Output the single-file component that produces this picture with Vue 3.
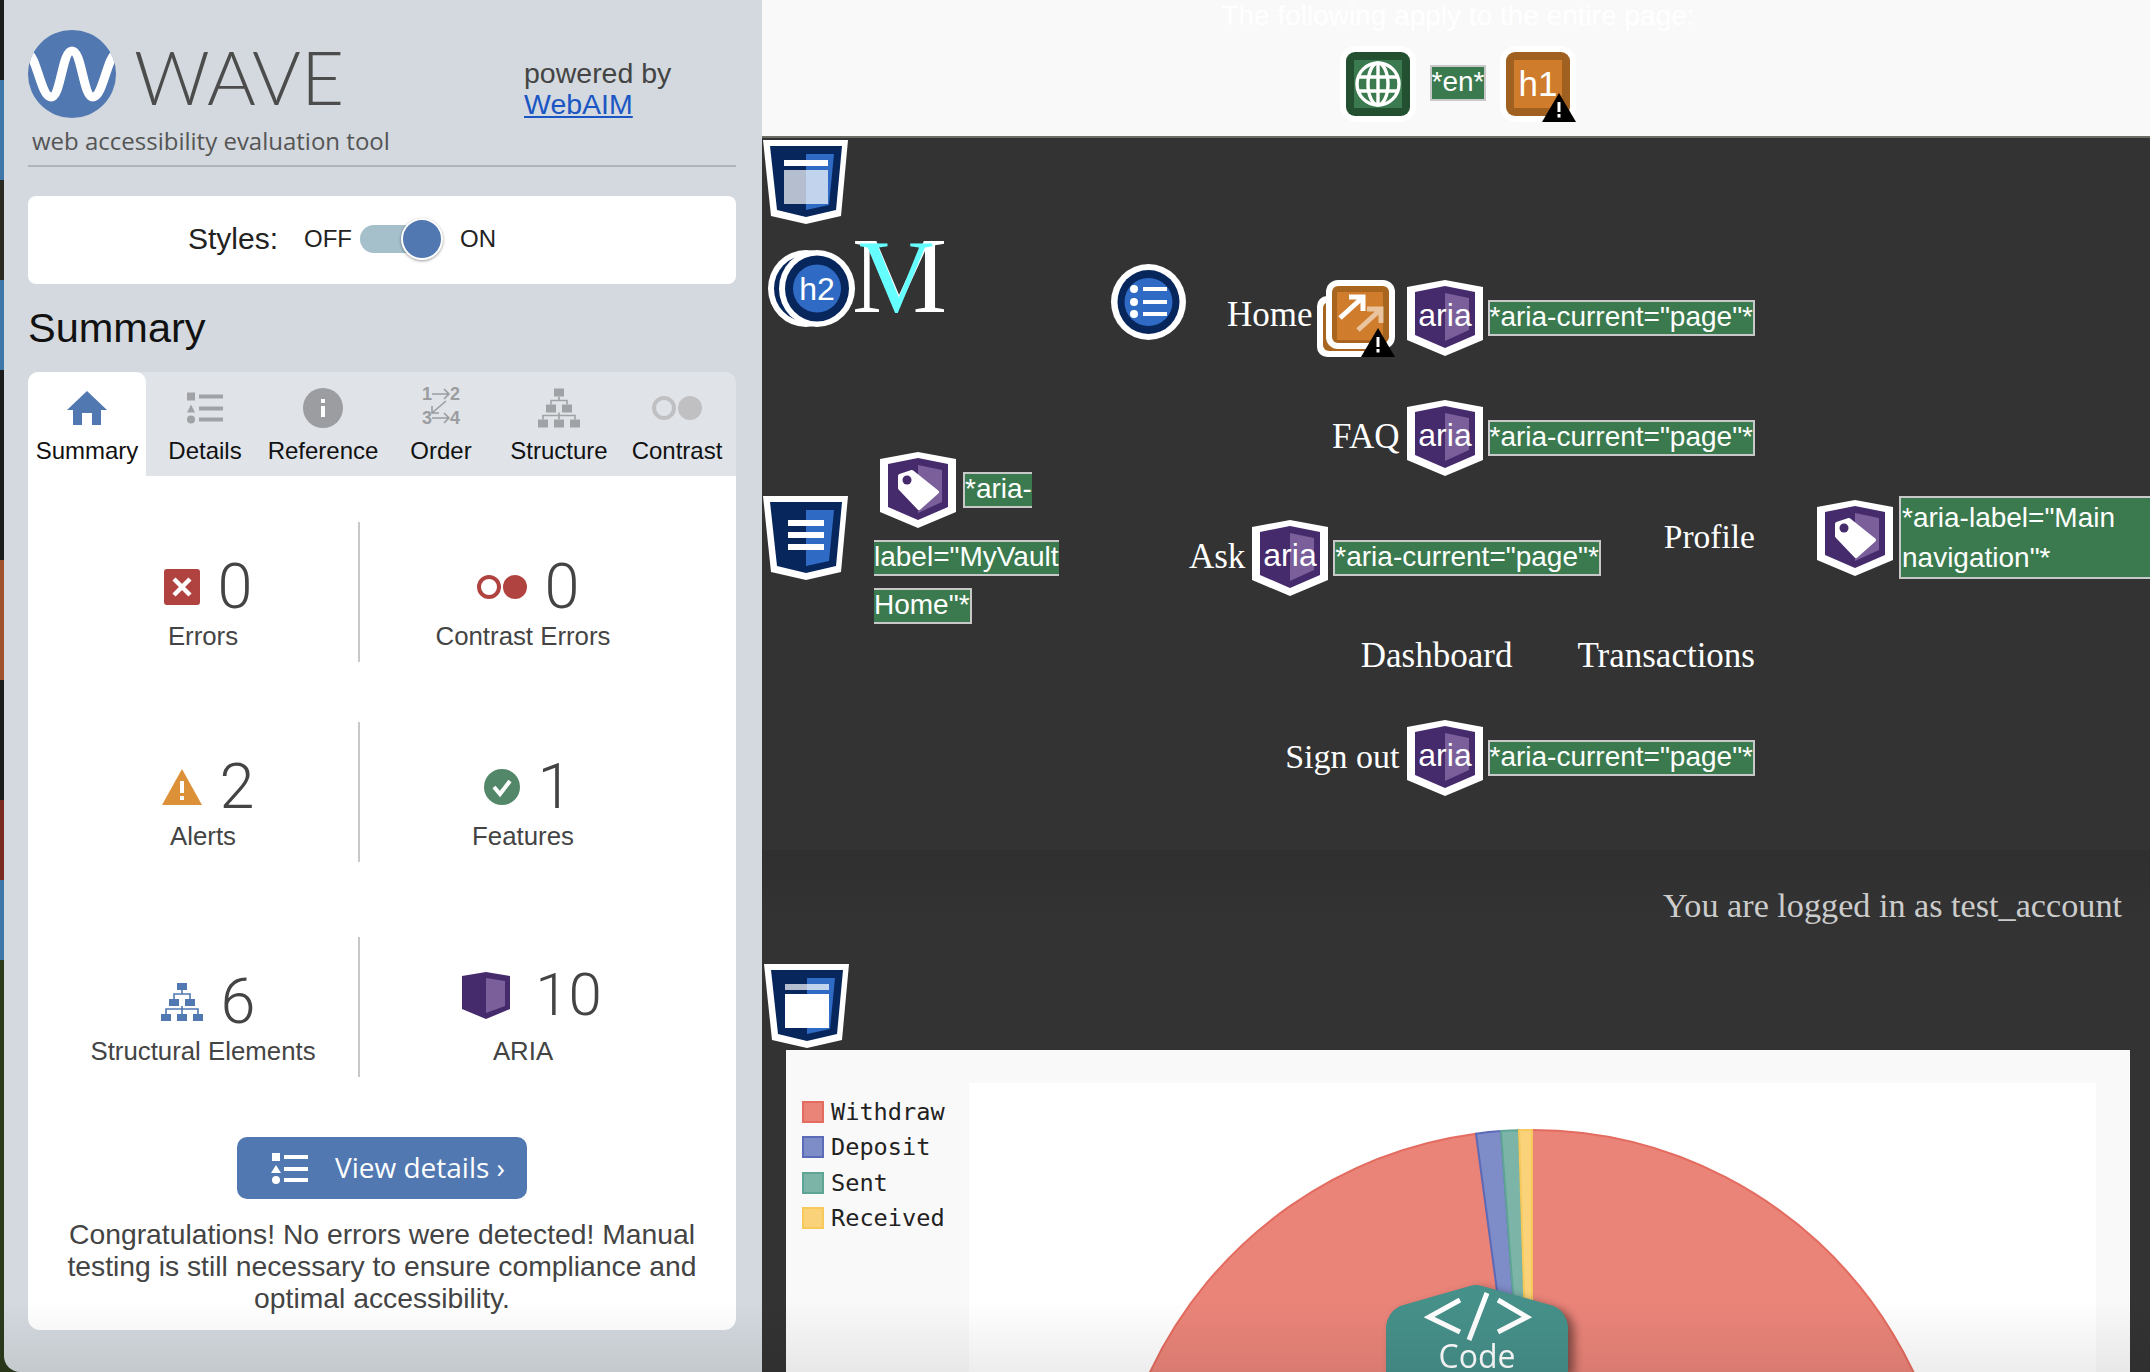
<template>
  <div class="window">
    <svg class="sprite" width="0" height="0">
      <defs>
        <symbol id="aria-shield" viewBox="0 0 76 76">
          <polygon points="0,7 38,0 76,7 76,60 38,76 0,60" fill="#fff" />
          <polygon points="8,12 38,6 68,12 68,55 38,68 8,55" fill="#452a6c" />
          <polygon points="38,13 62,18 62,50 38,61" fill="#7a5f9a" />
        </symbol>
        <symbol id="struct-shield" viewBox="0 0 85 84">
          <polygon points="0,0 85,0 78,76 43,84 8,76" fill="#fff" />
          <polygon points="7,6 79,6 73,70 43,77 14,70" fill="#07265c" />
          <polygon points="43,14 71,14 66,65 43,70" fill="#2f6bc4" />
        </symbol>
      </defs>
    </svg>

    <aside class="panel">
      <header class="brand">
        <div>
          <div class="brand-logo">
            <svg width="88" height="88" viewBox="0 0 88 88">
              <clipPath id="logo-clip"><circle cx="44" cy="44" r="44" /></clipPath>
              <circle cx="44" cy="44" r="44" fill="#5178b0" />
              <path clip-path="url(#logo-clip)" d="M0 24C8 24 13 67 23 67C33 67 34 21 44 21C54 21 55 67 65 67C75 67 80 24 88 24" fill="none" stroke="#fff" stroke-width="9" />
            </svg>
            <span class="brand-name">WAVE</span>
          </div>
          <div class="brand-sub">web accessibility evaluation tool</div>
        </div>
        <div class="powered">powered by<br /><a href="#">WebAIM</a></div>
      </header>

      <div class="styles-card">
        <span class="styles-title">Styles:</span>
        <span class="styles-state">OFF</span>
        <span class="toggle"><span class="knob"></span></span>
        <span class="styles-state on">ON</span>
      </div>

      <h2 class="summary-title">Summary</h2>

      <nav class="tabs">
        <div class="tab active">
          <svg width="40" height="34" viewBox="0 0 40 34"><path d="M20 0L40 19H34V34H25V22H15V34H6V19H0Z" fill="#5178b0" /></svg>
          <span>Summary</span>
        </div>
        <div class="tab">
          <svg width="36" height="31" viewBox="0 0 36 31" fill="#a0a2a5">
            <rect x="0" y="0" width="8" height="8" /><rect x="12" y="2" width="24" height="4" />
            <polygon points="4,12 8,20 0,20" /><rect x="12" y="14" width="24" height="4" />
            <circle cx="4" cy="27" r="4" /><rect x="12" y="25" width="24" height="4" />
          </svg>
          <span>Details</span>
        </div>
        <div class="tab">
          <svg width="40" height="40" viewBox="0 0 40 40">
            <circle cx="20" cy="20" r="20" fill="#9b9da0" />
            <rect x="18" y="11" width="4" height="4" fill="#fff" /><rect x="18" y="18" width="4" height="11" fill="#fff" />
          </svg>
          <span>Reference</span>
        </div>
        <div class="tab">
          <svg class="order-icon" width="38" height="42" viewBox="0 0 38 42" fill="none" stroke="#9b9da0" stroke-width="1.6">
            <text x="0" y="13" class="order-num">1</text>
            <text x="28" y="13" class="order-num">2</text>
            <text x="0" y="37" class="order-num">3</text>
            <text x="28" y="37" class="order-num">4</text>
            <path d="M10 7H27M22 2L27 7L22 12" />
            <path d="M24 14L10 26M10 19V26H17" />
            <path d="M10 31H27M22 26L27 31L22 36" />
          </svg>
          <span>Order</span>
        </div>
        <div class="tab">
          <svg width="42" height="39" viewBox="0 0 42 39" fill="#a0a2a5" stroke="none">
            <rect x="16" y="0" width="10" height="8" /><rect x="8" y="16" width="10" height="8" /><rect x="24" y="16" width="10" height="8" />
            <rect x="0" y="31" width="10" height="8" /><rect x="16" y="31" width="10" height="8" /><rect x="32" y="31" width="10" height="8" />
            <path d="M21 8V12M13 16V12H29V16M21 24V27M5 31V27H37V31M21 27V31" fill="none" stroke="#a0a2a5" stroke-width="1.6" />
          </svg>
          <span>Structure</span>
        </div>
        <div class="tab">
          <svg width="50" height="25" viewBox="0 0 50 25">
            <circle cx="12" cy="12.5" r="10" fill="none" stroke="#c0c0c3" stroke-width="4" /><circle cx="38" cy="12.5" r="12" fill="#c0c0c3" />
          </svg>
          <span>Contrast</span>
        </div>
      </nav>

      <section class="results">
        <div class="stats">
          <div class="stat">
            <div class="stat-top">
              <svg width="36" height="36" viewBox="0 0 36 36">
                <rect width="36" height="36" rx="3" fill="#b04340" />
                <path d="M10 10L26 26M26 10L10 26" stroke="#fff" stroke-width="4.5" />
              </svg>
              <span class="num">0</span>
            </div>
            <div class="stat-label">Errors</div>
          </div>
          <div class="stat">
            <div class="stat-top">
              <svg width="50" height="24" viewBox="0 0 50 24">
                <circle cx="12" cy="12" r="10" fill="none" stroke="#b04340" stroke-width="4" /><circle cx="38" cy="12" r="12" fill="#b04340" />
              </svg>
              <span class="num">0</span>
            </div>
            <div class="stat-label">Contrast Errors</div>
          </div>
          <div class="stat">
            <div class="stat-top">
              <svg width="40" height="36" viewBox="0 0 40 36">
                <polygon points="20,0 40,36 0,36" fill="#dc9038" />
                <rect x="18" y="12" width="4" height="12" fill="#fff" /><rect x="18" y="27" width="4" height="4" fill="#fff" />
              </svg>
              <span class="num">2</span>
            </div>
            <div class="stat-label">Alerts</div>
          </div>
          <div class="stat">
            <div class="stat-top">
              <svg width="36" height="36" viewBox="0 0 36 36">
                <circle cx="18" cy="18" r="18" fill="#53876a" />
                <path d="M10 18L16 25L26 12" fill="none" stroke="#fff" stroke-width="4" />
              </svg>
              <span class="num">1</span>
            </div>
            <div class="stat-label">Features</div>
          </div>
          <div class="stat">
            <div class="stat-top">
              <svg width="42" height="38" viewBox="0 0 42 38" fill="#5178b0">
                <rect x="16" y="0" width="10" height="7" /><rect x="8" y="16" width="10" height="7" /><rect x="24" y="16" width="10" height="7" />
                <rect x="0" y="31" width="10" height="7" /><rect x="16" y="31" width="10" height="7" /><rect x="32" y="31" width="10" height="7" />
                <path d="M21 7V11M13 16V11H29V16M21 23V26M5 31V26H37V31M21 26V31" fill="none" stroke="#5178b0" stroke-width="1.6" />
              </svg>
              <span class="num">6</span>
            </div>
            <div class="stat-label">Structural Elements</div>
          </div>
          <div class="stat">
            <div class="stat-top raised">
              <svg width="48" height="47" viewBox="0 0 48 47">
                <polygon points="0,4 24,0 48,4 48,37 24,47 0,37" fill="#452a6c" />
                <polygon points="24,6 43,9 43,34 24,41" fill="#7a5f9a" />
              </svg>
              <span class="num ten">10</span>
            </div>
            <div class="stat-label">ARIA</div>
          </div>
        </div>

        <button class="details-btn">
          <svg width="37" height="31" viewBox="0 0 37 31" fill="#fff">
            <rect x="1" y="0" width="8" height="8" /><rect x="13" y="2" width="24" height="4" />
            <polygon points="5,12 10,20 0,20" /><rect x="13" y="14" width="24" height="4" />
            <circle cx="5" cy="27" r="4" /><rect x="13" y="25" width="24" height="4" />
          </svg>
          <span>View details ›</span>
        </button>

        <p class="congrats">Congratulations! No errors were detected! Manual testing is still necessary to ensure compliance and optimal accessibility.</p>
      </section>
    </aside>

    <main class="page">
      <div class="topbar">
        <div class="topbar-note">The following apply to the entire page:</div>
        <div class="topbar-icons">
          <svg width="76" height="76" viewBox="0 0 76 76">
            <rect width="76" height="76" rx="16" fill="#fff" />
            <rect x="6" y="6" width="64" height="64" rx="9" fill="#225030" />
            <rect x="14" y="14" width="48" height="48" fill="#3b7a4e" />
            <g fill="none" stroke="#fff" stroke-width="3.4">
              <circle cx="38" cy="38" r="21" />
              <ellipse cx="38" cy="38" rx="10" ry="21" />
              <path d="M38 17V59M18 31H58M18 45H58" />
            </g>
          </svg>
          <span class="wave-label en">*en*</span>
          <svg width="76" height="76" viewBox="0 0 76 76">
            <rect width="76" height="76" rx="16" fill="#fff" />
            <rect x="6" y="6" width="64" height="64" rx="9" fill="#a0601f" />
            <rect x="14" y="14" width="48" height="48" fill="#cf7c2c" />
            <text x="38" y="50" text-anchor="middle" class="icon-text h1">h1</text>
            <polygon points="59,47 76,76 42,76" fill="#000" />
            <rect x="57.500" y="56" width="3" height="10" fill="#fff" /><rect x="57.500" y="68" width="3" height="3.500" fill="#fff" />
          </svg>
        </div>
      </div>

      <div class="dark">
        <svg class="shield-top" width="85" height="84" viewBox="0 0 85 84">
          <use href="#struct-shield" />
          <rect x="21" y="20" width="44" height="6" fill="#fff" />
          <rect x="21" y="30" width="44" height="34" fill="#fff" opacity=".7" />
        </svg>

        <div class="site-header">
          <div class="site-left">
            <div class="logo-row">
              <svg width="88" height="77" viewBox="0 0 88 77">
                <ellipse cx="38" cy="38.500" rx="38" ry="38.500" fill="#fff" />
                <ellipse cx="38" cy="38.500" rx="32" ry="33" fill="#07265c" />
                <ellipse cx="49" cy="38.500" rx="38" ry="38.500" fill="#fff" />
                <ellipse cx="49" cy="38.500" rx="32" ry="33" fill="#07265c" />
                <ellipse cx="49" cy="38.500" rx="24" ry="24" fill="#2f6bc4" />
                <text x="49" y="50" text-anchor="middle" class="icon-text">h2</text>
              </svg>
              <div class="site-mark">M<span class="site-mark-v">V</span></div>
            </div>
            <div class="brand-row">
              <svg class="shield-nav" width="85" height="84" viewBox="0 0 85 84">
                <use href="#struct-shield" />
                <rect x="25" y="24" width="36" height="6" fill="#fff" />
                <rect x="25" y="36" width="36" height="6" fill="#fff" />
                <rect x="25" y="48" width="36" height="6" fill="#fff" />
              </svg>
              <div class="brand-label">
                <div class="brand-label-first">
                  <svg width="76" height="76" viewBox="0 0 76 76">
                    <use href="#aria-shield" />
                    <path d="M20 24L32 20L57 40L39 56L20 36Z" fill="#fff" stroke="#fff" stroke-width="4" stroke-linejoin="round" />
                    <circle cx="27" cy="28" r="4.500" fill="#452a6c" />
                  </svg>
                  <span class="wave-label no-right">*aria-</span>
                </div>
                <span class="wave-label no-left no-right">label="MyVault</span>
                <span class="wave-label no-left">Home"*</span>
              </div>
            </div>
          </div>

          <svg class="list-icon" width="75" height="76" viewBox="0 0 75 76">
            <ellipse cx="37.500" cy="38" rx="37.500" ry="38" fill="#fff" />
            <ellipse cx="37.500" cy="38" rx="31" ry="32" fill="#07265c" />
            <ellipse cx="37.500" cy="38" rx="24" ry="24" fill="#2f6bc4" />
            <g fill="#fff">
              <circle cx="23" cy="25" r="4" /><rect x="32" y="23" width="24" height="4" />
              <circle cx="23" cy="38" r="4" /><rect x="32" y="36" width="24" height="4" />
              <circle cx="23" cy="50" r="4" /><rect x="32" y="48" width="24" height="4" />
            </g>
          </svg>

          <div class="nav-rows">
            <div class="nav-row">
              <a class="nav-link home">Home</a>
              <svg class="link-icon" width="78" height="77" viewBox="0 0 78 77">
                <rect x="0" y="16" width="62" height="61" rx="10" fill="#fff" />
                <rect x="6" y="22" width="52" height="49" rx="6" fill="#a8651f" />
                <rect x="9" y="0" width="69" height="69" rx="12" fill="#fff" />
                <rect x="15" y="6" width="57" height="57" rx="6" fill="#a8651f" />
                <rect x="20" y="12" width="46" height="48" fill="#cf7c2c" />
                <g fill="none" stroke="#fff" stroke-width="5">
                  <path d="M23 38L44 19M32 17H46V31" />
                  <path d="M41 50L62 31M50 29H64V43" opacity=".55" />
                </g>
                <polygon points="61,48 78,77 44,77" fill="#000" />
                <rect x="59.500" y="57" width="3" height="10" fill="#fff" /><rect x="59.500" y="69" width="3" height="3.500" fill="#fff" />
              </svg>
              <svg class="aria-icon" width="76" height="76" viewBox="0 0 76 76">
                <use href="#aria-shield" /><text x="38" y="46" text-anchor="middle" class="icon-text">aria</text>
              </svg>
              <span class="wave-label">*aria-current="page"*</span>
            </div>
            <div class="nav-row second">
              <a class="nav-link">FAQ</a>
              <svg class="aria-icon" width="76" height="76" viewBox="0 0 76 76">
                <use href="#aria-shield" /><text x="38" y="46" text-anchor="middle" class="icon-text">aria</text>
              </svg>
              <span class="wave-label">*aria-current="page"*</span>
            </div>
            <div class="nav-row third">
              <a class="nav-link">Ask</a>
              <svg class="aria-icon" width="76" height="76" viewBox="0 0 76 76">
                <use href="#aria-shield" /><text x="38" y="46" text-anchor="middle" class="icon-text">aria</text>
              </svg>
              <span class="wave-label">*aria-current="page"*</span>
              <a class="nav-link profile">Profile</a>
            </div>
            <div class="nav-row plain">
              <a class="nav-link">Dashboard</a>
              <a class="nav-link transactions">Transactions</a>
            </div>
            <div class="nav-row last">
              <a class="nav-link sign-out">Sign out</a>
              <svg class="aria-icon" width="76" height="76" viewBox="0 0 76 76">
                <use href="#aria-shield" /><text x="38" y="46" text-anchor="middle" class="icon-text">aria</text>
              </svg>
              <span class="wave-label">*aria-current="page"*</span>
            </div>
          </div>

          <div class="main-nav-label">
            <svg width="76" height="76" viewBox="0 0 76 76">
              <use href="#aria-shield" />
              <path d="M20 24L32 20L57 40L39 56L20 36Z" fill="#fff" stroke="#fff" stroke-width="4" stroke-linejoin="round" />
              <circle cx="27" cy="28" r="4.500" fill="#452a6c" />
            </svg>
            <div class="main-nav-text">*aria-label="Main navigation"*</div>
          </div>
        </div>

        <div class="account">
          <div class="account-text">You are logged in as test_account</div>
          <svg class="shield-main" width="85" height="84" viewBox="0 0 85 84">
            <use href="#struct-shield" />
            <rect x="21" y="20" width="44" height="6" fill="#fff" opacity=".7" />
            <rect x="21" y="30" width="44" height="34" fill="#fff" />
          </svg>
        </div>

        <section class="chart">
          <ul class="legend">
            <li v-for="item in legend" :key="item.name">
              <i :style="{ background: item.fill, borderColor: item.line }"></i>{{ item.name }}
            </li>
          </ul>
          <div class="plot">
            <svg width="1127" height="289" viewBox="0 0 1127 289" stroke-width="2">
              <path d="M563 469L563 47A422 422 0 1 1 507 50.700Z" fill="#ea8479" stroke="#e46b5f" />
              <path d="M563 469L507 50.700A422 422 0 0 1 532 48.100Z" fill="#7e8cc8" stroke="#5c6bb8" />
              <path d="M563 469L532 48.100A422 422 0 0 1 550 47.200Z" fill="#7cb5a8" stroke="#5fa595" />
              <path d="M563 469L550 47.200A422 422 0 0 1 563 47Z" fill="#fad27a" stroke="#f7c85a" />
            </svg>
          </div>
          <svg class="code-tab" width="182" height="88" viewBox="0 0 182 88">
            <path d="M0 88V42Q2 28 14 22L84 2Q90 0 96 2L168 22Q180 28 182 42V88Z" fill="#46908a" />
            <path d="M74 16L43 33L74 48M101 9L83 56M112 16L141 33L112 48" fill="none" stroke="#fff" stroke-width="5" />
            <text x="91" y="84" text-anchor="middle" class="code-text">Code</text>
          </svg>
        </section>
      </div>
    </main>

    <div class="bottom-shade"></div>
  </div>
</template>

<script setup>
const legend = [
  { name: 'Withdraw', fill: '#ea8479', line: '#e46b5f' },
  { name: 'Deposit', fill: '#7e8cc8', line: '#5c6bb8' },
  { name: 'Sent', fill: '#7cb5a8', line: '#5fa595' },
  { name: 'Received', fill: '#fad27a', line: '#f7c85a' },
]
</script>

<style>
html, body {
  margin: 0;
  overflow: hidden;
  background: #222;
}
</style>

<style scoped>
.sprite {
  position: absolute;
}
.window {
  position: relative;
  display: flex;
  width: 2150px;
  height: 1372px;
  overflow: hidden;
  font-family: "Liberation Sans", Arial, sans-serif;
  background: linear-gradient(#1c1c1c 80px, #3f78a8 80px, #3f78a8 180px, #2a2a22 180px, #2a2a22 280px, #3f78a8 280px, #3f78a8 370px, #1c1c1c 370px, #1c1c1c 560px, #a0522d 560px, #a0522d 680px, #1c1c1c 680px, #1c1c1c 800px, #7a2a22 800px, #7a2a22 880px, #3f78a8 880px, #3f78a8 960px, #2c3a1c 960px);
}

/* wave sidebar */
.panel {
  flex: none;
  box-sizing: border-box;
  width: 758px;
  height: 1372px;
  margin-left: 4px;
  padding: 30px 26px 0 24px;
  background: #d3d9de;
  border-bottom-left-radius: 16px;
}
.brand {
  display: flex;
  justify-content: space-between;
  height: 135px;
  border-bottom: 2px solid #b0b5ba;
}
.brand-logo {
  display: flex;
  align-items: center;
  height: 88px;
}
.brand-name {
  margin: 4px 0 0 18px;
  font-family: Lato, sans-serif;
  font-weight: 300;
  font-size: 74.500px;
  line-height: 88px;
  color: #4c4c4c;
}
.brand-sub {
  margin: 6px 0 0 4px;
  font-family: "Open Sans", sans-serif;
  font-size: 24px;
  line-height: 34px;
  color: #555;
}
.powered {
  width: 212px;
  margin-top: 28px;
  font-size: 28.500px;
  line-height: 31px;
  color: #444;
}
.powered a {
  color: #1a56c4;
}
.styles-card {
  display: flex;
  align-items: center;
  box-sizing: border-box;
  height: 88px;
  margin-top: 29px;
  padding: 0 0 2px 160px;
  background: #fff;
  border-radius: 8px;
}
.styles-title {
  font-size: 30px;
  color: #222;
}
.styles-state {
  margin-left: 26px;
  font-size: 24px;
  color: #222;
}
.styles-state.on {
  margin-left: 28px;
}
.toggle {
  position: relative;
  width: 72px;
  height: 28px;
  margin-left: 8px;
  background: #a5bfcb;
  border-radius: 14px;
}
.knob {
  position: absolute;
  right: -11px;
  top: -7px;
  box-sizing: border-box;
  width: 42px;
  height: 42px;
  background: #5178b0;
  border: 2px solid #fff;
  border-radius: 50%;
  box-shadow: 0 1px 3px rgba(0, 0, 0, .4);
}
.summary-title {
  margin: 11px 0;
  font-size: 41.500px;
  font-weight: 400;
  line-height: 66px;
  color: #111;
}
.tabs {
  display: flex;
  height: 104px;
  background: #e0e4e9;
  border-radius: 10px 10px 0 0;
}
.tab {
  display: flex;
  flex-direction: column;
  align-items: center;
  box-sizing: border-box;
  width: 118px;
  padding-top: 15px;
  font-size: 24px;
  color: #111;
}
.tab svg {
  height: 42px;
}
.tab span {
  margin-top: 6px;
  line-height: 32px;
  white-space: nowrap;
}
.order-icon {
  overflow: visible;
}
.order-num {
  font-family: "Liberation Sans", sans-serif;
  font-size: 18px;
  font-weight: 700;
  fill: #9b9da0;
  stroke: none;
}
.tab.active {
  background: #fff;
  border-radius: 10px 10px 0 0;
}
.results {
  height: 854px;
  box-sizing: border-box;
  padding-top: 46px;
  background: #fff;
  border-radius: 0 0 12px 12px;
}
.stats {
  display: grid;
  grid-template-columns: 312px 326px;
  grid-template-rows: 140px 140px 140px;
  row-gap: 60px;
  padding-left: 20px;
}
.stat {
  height: 140px;
}
.stats .stat:nth-child(n + 5) {
  margin-top: 15px;
}
.stat:nth-child(odd) {
  border-right: 2px solid #c8c8c8;
}
.stat-top {
  display: flex;
  align-items: center;
  justify-content: center;
  gap: 18px;
  box-sizing: border-box;
  height: 100px;
  padding: 43px 0 13px 10px;
}
.stat-top.raised {
  padding: 36px 0 20px 18px;
  gap: 25px;
}
.num {
  font-family: Roboto, sans-serif;
  font-weight: 300;
  font-size: 63px;
  line-height: 44px;
  color: #444;
}
.num.ten {
  font-size: 60px;
}
.stat-label {
  font-size: 25.800px;
  line-height: 28px;
  text-align: center;
  color: #444;
}
.details-btn {
  display: flex;
  align-items: center;
  box-sizing: border-box;
  width: 290px;
  height: 62px;
  margin: 75px auto 0;
  padding: 0 0 3px 34px;
  background: #5178b0;
  border: 0;
  border-radius: 10px;
  font-family: "Open Sans", sans-serif;
  font-size: 28px;
  color: #fff;
}
.details-btn svg {
  margin-top: 3px;
}
.details-btn span {
  margin-left: 27px;
}
.congrats {
  margin: 19px 0 0;
  padding: 0 20px;
  font-size: 28.300px;
  line-height: 32px;
  text-align: center;
  color: #444;
}

/* page under test */
.page {
  flex: 1;
  display: flex;
  flex-direction: column;
  min-width: 0;
  height: 1372px;
}
.topbar {
  flex: none;
  box-sizing: border-box;
  height: 138px;
  background: #f9f9f9;
  border-bottom: 2px solid #6a6e64;
}
.topbar-note {
  height: 32px;
  margin-left: 4px;
  font-size: 28px;
  line-height: 32px;
  text-align: center;
  color: #fff;
}
.topbar-icons {
  display: flex;
  align-items: center;
  justify-content: center;
  gap: 14px;
  margin: 14px 0 0 4px;
}
.wave-label {
  display: inline-block;
  box-sizing: border-box;
  height: 36px;
  padding: 0;
  font-family: "Liberation Sans", Arial, sans-serif;
  font-size: 28px;
  line-height: 30px;
  white-space: nowrap;
  color: #fff;
  background: #3b7a4e;
  border: 2px solid #c8c8c8;
}
.wave-label.en {
  margin-top: -2px;
}
.no-right {
  border-right: 0;
}
.no-left {
  border-left: 0;
}
.icon-text {
  font-family: "Liberation Sans", sans-serif;
  font-size: 32px;
  fill: #fff;
}
.icon-text.h1 {
  font-size: 35px;
}
.dark {
  flex: 1;
  min-height: 0;
  background: #333;
}
.shield-top {
  display: block;
  margin: 2px 0 0 1px;
}
.site-header {
  display: flex;
  align-items: flex-start;
  height: 626px;
}
.site-left {
  flex: none;
  width: 349px;
}
.logo-row {
  display: flex;
  margin: 26px 0 0 6px;
  height: 77px;
}
.site-mark {
  position: relative;
  margin: -35px 0 0 -4px;
  font-family: "Liberation Serif", serif;
  font-size: 107px;
  line-height: 122px;
  color: #fff;
}
.site-mark-v {
  position: absolute;
  left: 7px;
  top: 0;
  color: #6ff;
  font-size: 103px;
}
.brand-row {
  display: flex;
  align-items: flex-start;
  margin-top: 125px;
}
.shield-nav {
  flex: none;
  margin: 44px 0 0 1px;
}
.brand-label {
  display: flex;
  flex-direction: column;
  align-items: flex-start;
  gap: 12px;
  margin-left: 26px;
}
.brand-label-first {
  display: flex;
  align-items: center;
  gap: 7px;
  margin: 0 0 0 6px;
}
.list-icon {
  flex: none;
  margin-top: 40px;
}
.nav-rows {
  flex: none;
  display: flex;
  flex-direction: column;
  width: 569px;
  margin-top: 56px;
}
.nav-row {
  display: flex;
  align-items: center;
  justify-content: flex-end;
  height: 76px;
  font-family: "Liberation Serif", serif;
}
.nav-row.second,
.nav-row.third {
  margin-top: 44px;
}
.nav-row.plain {
  height: 34px;
  margin-top: 44px;
}
.nav-row.last {
  margin-top: 46px;
}
.nav-link {
  margin-bottom: 2px;
  font-size: 35px;
  line-height: 40px;
  color: #fff;
  white-space: nowrap;
}
.home {
  margin-bottom: 6px;
}
.sign-out {
  font-size: 34px;
}
.link-icon {
  margin-left: 4px;
}
.aria-icon {
  flex: none;
  margin: 0 5px 0 7px;
}
.link-icon + .aria-icon {
  margin-left: 12px;
}
.profile {
  margin: 0 0 42px 63px;
  font-size: 33.500px;
}
.transactions {
  margin-left: 65px;
}
.main-nav-label {
  display: flex;
  flex: none;
  width: 333px;
  margin: 272px 0 0 62px;
  gap: 6px;
}
.main-nav-label svg {
  flex: none;
  margin-top: 4px;
}
.main-nav-text {
  box-sizing: border-box;
  flex: 1;
  height: 83px;
  padding-left: 1px;
  font-size: 28px;
  line-height: 40px;
  color: #fff;
  background: #3b7a4e;
  border: 2px solid #c8c8c8;
  border-right: 0;
}
.account {
  box-sizing: border-box;
  height: 200px;
  padding-top: 34px;
  background: linear-gradient(#2f2f2f, #333 70px);
}
.account-text {
  padding-right: 28px;
  font-family: "Liberation Serif", serif;
  font-size: 34.200px;
  line-height: 44px;
  text-align: right;
  color: #ccc;
}
.shield-main {
  display: block;
  margin: 36px 0 0 2px;
}
.chart {
  position: relative;
  display: flex;
  height: 322px;
  margin: 0 20px 0 24px;
  padding-top: 33px;
  box-sizing: border-box;
  overflow: hidden;
  background: #f9f9f9;
}
.legend {
  flex: none;
  box-sizing: border-box;
  width: 183px;
  margin: 11px 0 0;
  padding: 0 0 0 16px;
  list-style: none;
  font-family: "DejaVu Sans Mono", monospace;
  font-size: 23.600px;
  color: #222;
}
.legend li {
  display: flex;
  align-items: center;
  height: 35.500px;
  white-space: nowrap;
}
.legend i {
  flex: none;
  box-sizing: border-box;
  width: 22px;
  height: 22px;
  margin-right: 7px;
  border: 2px solid;
}
.plot {
  flex: none;
  width: 1127px;
  height: 289px;
  background: #fff;
}
.plot svg {
  display: block;
}
.code-tab {
  position: absolute;
  left: 600px;
  top: 234px;
  overflow: visible;
  filter: drop-shadow(6px 4px 5px rgba(0, 0, 0, .45));
}
.code-text {
  font-family: "Open Sans", sans-serif;
  font-size: 32px;
  fill: #fff;
}
.bottom-shade {
  position: absolute;
  left: 0;
  right: 0;
  bottom: 0;
  height: 72px;
  background: linear-gradient(rgba(0, 0, 0, 0), rgba(0, 0, 0, .07));
  pointer-events: none;
}
</style>
